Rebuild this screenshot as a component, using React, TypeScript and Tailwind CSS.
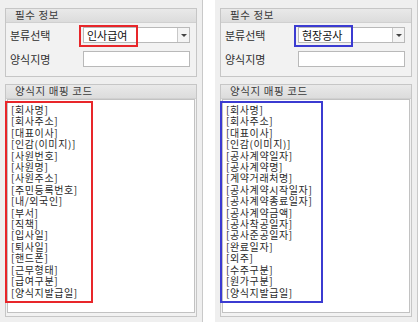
import React from "react";

interface PanelProps {
  category: string;
  codes: string[];
  accent: string;
  boxWidth: string;
}

const leftCodes = [
  "회사명",
  "회사주소",
  "대표이사",
  "인감(이미지)",
  "사원번호",
  "사원명",
  "사원주소",
  "주민등록번호",
  "내/외국인",
  "부서",
  "직책",
  "입사일",
  "퇴사일",
  "핸드폰",
  "근무형태",
  "급여구분",
  "양식지발급일",
];

const rightCodes = [
  "회사명",
  "회사주소",
  "대표이사",
  "인감(이미지)",
  "공사계약일자",
  "공사계약명",
  "계약거래처명",
  "공사계약시작일자",
  "공사계약종료일자",
  "공사계약금액",
  "공사착공일자",
  "공사준공일자",
  "완료일자",
  "외주",
  "수주구분",
  "원가구분",
  "양식지발급일",
];

function GroupHeader({ title }: { title: string }) {
  return (
    <div className="flex h-[14px] items-center border-b border-[#d0d0d0] bg-gradient-to-b from-[#e9e9e9] to-[#dcdcdc] pl-[9px] text-[10.5px] leading-none tracking-[0.6px] text-[#3a3a3a]">
      {title}
    </div>
  );
}

function Panel({ category, codes, accent, boxWidth }: PanelProps) {
  return (
    <section className="flex h-[322px] w-[203px] flex-col border-r border-[#c9c9c9] bg-[#efefef] px-[5px] pt-2">
      <div className="w-[192px] border border-[#c6c6c6] bg-[#f2f2f2]">
        <GroupHeader title="필수 정보" />
        <div className="flex flex-col gap-2 px-[4px] pb-[9px] pt-[4px] text-[11px] text-[#2f2f2f]">
          <div className="flex h-4 items-center">
            <span className="w-[73px]">분류선택</span>
            <div className="relative flex h-4 w-[107px] border border-[#b9b9b9] bg-white">
              <span className="flex-1 pl-[3px] text-[11px] leading-[14px] text-[#111]">{category}</span>
              <span className="flex w-[12px] items-center justify-center border-l border-[#c8c8c8] bg-[#f4f4f4]">
                <span className="h-0 w-0 border-x-[3px] border-t-[3px] border-x-transparent border-t-[#444]" />
              </span>
              <span className={`absolute -top-[3px] -left-[5px] h-[22px] w-[59px] border-2 ${accent}`} />
            </div>
          </div>
          <div className="flex h-4 items-center">
            <span className="w-[73px]">양식지명</span>
            <div className="h-4 w-[107px] border border-[#b9b9b9] bg-white" />
          </div>
        </div>
      </div>
      <div className="mt-[7px] flex w-[192px] flex-col border border-[#c6c6c6] bg-[#f2f2f2] pb-[3px]">
        <GroupHeader title="양식지 매핑 코드" />
        <div className="mx-[1px] h-[214px] border border-[#c2c2c2] bg-white pt-[1px]">
          <div className={`-ml-[3px] border-2 pl-[4px] pt-[1px] pb-[3px] ${accent} ${boxWidth}`}>
            {codes.map((code) => (
              <div key={code} className="text-[10px] leading-[11.4px] tracking-[0.6px] text-[#2a2a2a]">
                [{code}]
              </div>
            ))}
          </div>
        </div>
      </div>
    </section>
  );
}

export default function App() {
  return (
    <div className="flex h-[322px] w-[418px] gap-3 bg-white font-['Noto_Sans_CJK_KR','Liberation_Sans',sans-serif]">
      <Panel category="인사급여" codes={leftCodes} accent="border-[#e8262a]" boxWidth="w-[88px]" />
      <Panel category="현장공사" codes={rightCodes} accent="border-[#3b3bd1]" boxWidth="w-[103px]" />
    </div>
  );
}
